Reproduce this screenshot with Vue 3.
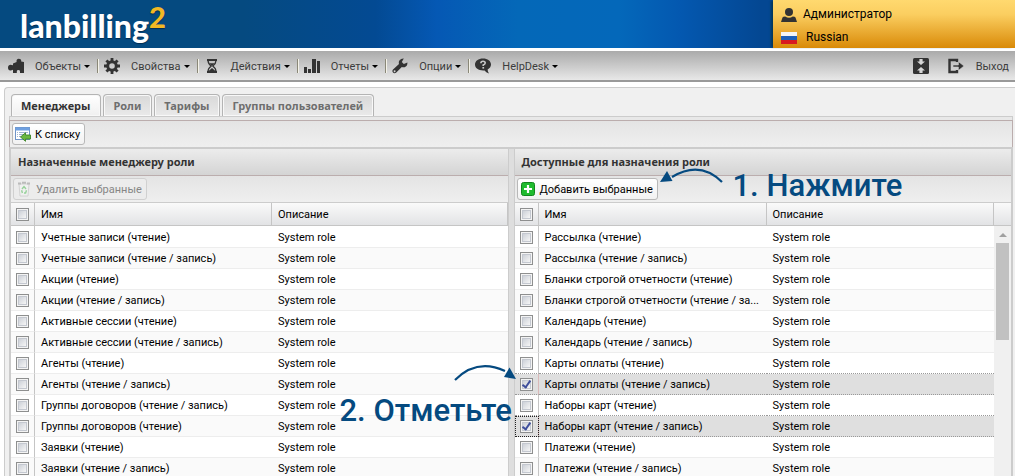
<script setup>
import { ref } from 'vue'

const menu = [
  { icon: 'puzzle', label: 'Объекты' },
  { icon: 'gear', label: 'Свойства' },
  { icon: 'hourglass', label: 'Действия' },
  { icon: 'bars', label: 'Отчеты' },
  { icon: 'wrench', label: 'Опции' },
  { icon: 'help', label: 'HelpDesk' }
]

const tabs = ['Менеджеры', 'Роли', 'Тарифы', 'Группы пользователей']
const activeTab = ref(0)

const assigned = ref([
  'Учетные записи (чтение)',
  'Учетные записи (чтение / запись)',
  'Акции (чтение)',
  'Акции (чтение / запись)',
  'Активные сессии (чтение)',
  'Активные сессии (чтение / запись)',
  'Агенты (чтение)',
  'Агенты (чтение / запись)',
  'Группы договоров (чтение / запись)',
  'Группы договоров (чтение)',
  'Заявки (чтение)',
  'Заявки (чтение / запись)'
].map((name) => ({ name, checked: false })))

const available = ref([
  'Рассылка (чтение)',
  'Рассылка (чтение / запись)',
  'Бланки строгой отчетности (чтение)',
  'Бланки строгой отчетности (чтение / за...',
  'Календарь (чтение)',
  'Календарь (чтение / запись)',
  'Карты оплаты (чтение)',
  'Карты оплаты (чтение / запись)',
  'Наборы карт (чтение)',
  'Наборы карт (чтение / запись)',
  'Платежи (чтение)',
  'Платежи (чтение / запись)'
].map((name, i) => ({ name, checked: i === 7 || i === 9, focused: i === 9 })))
</script>

<template>
  <div class="app">
    <header class="banner">
      <div class="logo"><span>lanbilling</span><span class="logo-two">2</span></div>
      <div class="account">
        <div class="account-row">
          <svg class="ic-user" viewBox="0 0 16 14" aria-hidden="true">
            <circle cx="8" cy="4" r="4" />
            <path d="M0 14 L1.5 9.5 Q2 8.6 4.2 8.6 Q8 11 11.8 8.6 Q14 8.6 14.5 9.5 L16 14 Z" />
          </svg>
          <span>Администратор</span>
        </div>
        <div class="account-row">
          <svg class="ic-flag" viewBox="0 0 16 12" aria-hidden="true">
            <rect width="16" height="12" fill="#f4f4f4" />
            <rect y="4" width="16" height="4" fill="#1d5fb8" />
            <rect y="8" width="16" height="4" fill="#d81920" />
          </svg>
          <span class="lang">Russian</span>
        </div>
      </div>
    </header>

    <nav class="menubar">
      <template v-for="item in menu" :key="item.label">
        <button type="button" class="menu-item">
          <svg class="menu-icon" viewBox="0 0 16 16" aria-hidden="true">
            <path v-if="item.icon === 'puzzle'" d="M5 5.4 L8.6 4 Q8 1 10.8 0.8 Q13.6 0.8 13.2 3.6 L16 4 V15 H12 V13.4 Q12 12 10.4 12 Q8.8 12 8.8 13.4 V15 H5 V11.8 Q3.8 12.6 2.4 12.6 Q0 12.4 0 9.6 Q0.2 6.8 2.6 6.8 Q4.4 6.8 5 7.2 Z" />
            <g v-else-if="item.icon === 'gear'">
              <circle cx="8" cy="8" r="4.3" fill="none" stroke="currentColor" stroke-width="3" />
              <path d="M6.6 0h2.8v3H6.6zM6.6 13h2.8v3H6.6zM0 6.6h3v2.8H0zM13 6.6h3v2.8h-3zM1.4 3.4l2-2 2.2 2.2-2 2zM10.4 12.4l2-2 2.2 2.2-2 2zM12.6 1.4l2 2-2.2 2.2-2-2zM3.6 10.4l2 2-2.2 2.2-2-2z" />
            </g>
            <g v-else-if="item.icon === 'hourglass'">
              <path d="M3 1h10v2H3zM3 13h10v2H3zM5.5 5.2h5L8 8zM4.6 13 L8 10 L11.4 13z" />
              <path d="M4 2.5 Q4 5.5 7.2 8 Q4 10.5 4 13.5 M12 2.5 Q12 5.5 8.8 8 Q12 10.5 12 13.5" fill="none" stroke="currentColor" stroke-width="1.3" />
            </g>
            <path v-else-if="item.icon === 'bars'" d="M0 9h3v6H0zM4 11h3v4H4zM8 1h4v14H8zM13 3h3v12h-3z" />
            <path v-else-if="item.icon === 'wrench'" d="M11.8 0.6 L9.8 4 L11.8 6 L15.4 4.6 Q15.6 8.2 12.6 9.2 Q11 9.5 9.8 9 L4 14.8 Q2.4 15.8 1 14.6 Q-0.2 13 1 11.6 L7 6 Q6.4 4.4 7.4 2.6 Q9 0.4 11.8 0.6 Z M2.6 12.3 A0.9 0.9 0 1 0 2.61 12.3 Z" fill-rule="evenodd" />
            <g v-else>
              <path d="M8 0.6 C12.6 0.6 16 3.2 16 6.6 C16 8.8 14.6 10.6 12.6 11.6 Q12.6 13.6 14 15.4 Q10.8 14.8 9.6 12.5 C4 13 0 10.4 0 6.6 C0 3.2 3.4 0.6 8 0.6 Z" />
              <path d="M5.9 5.2 Q5.9 3.2 8 3.2 Q10.2 3.2 10.2 4.9 Q10.2 6 8.2 7 V8" fill="none" stroke="#c8c8c8" stroke-width="1.6" />
              <rect x="7.4" y="9" width="1.7" height="1.6" fill="#c8c8c8" />
            </g>
          </svg>
          <span class="menu-label">{{ item.label }}</span>
          <span class="caret"></span>
        </button>
        <span v-if="item.icon !== 'help'" class="sep"></span>
      </template>

      <button type="button" class="menu-tool" aria-label="Свернуть">
        <svg class="menu-icon" viewBox="0 0 16 16" aria-hidden="true">
          <rect width="16" height="16" rx="1.5" />
          <path d="M6.4 1h3.2v2.4H12L8 7 4 3.4h2.4zM6.4 15h3.2v-2.4H12L8 9l-4 3.6h2.4z" fill="#d6d6d6" />
        </svg>
      </button>
      <button type="button" class="menu-exit">
        <svg class="menu-icon" viewBox="0 0 16 16" aria-hidden="true">
          <path d="M9 4V2H1.5v12H9v-2" fill="none" stroke="currentColor" stroke-width="2.4" />
          <path d="M5 7h5.4V3.6L16 8l-5.6 4.4V9H5z" stroke="#d0d0d0" stroke-width="0.6" />
        </svg>
        <span>Выход</span>
      </button>
    </nav>

    <main class="workspace">
      <div class="tabs" role="tablist">
        <button
          v-for="(tab, i) in tabs"
          :key="tab"
          type="button"
          role="tab"
          class="tab"
          :class="{ active: i === activeTab }"
          :aria-selected="i === activeTab"
          @click="activeTab = i"
        >{{ tab }}</button>
      </div>

      <section class="content">
        <div class="tab-base"></div>
        <div class="toolbar">
          <button type="button" class="btn">
            <svg class="btn-icon" viewBox="0 0 16 16" aria-hidden="true">
              <rect x="0.5" y="1.5" width="14" height="12" fill="#fff" stroke="#6f94c8" />
              <rect x="0.5" y="1.5" width="14" height="3" fill="#6fa0e0" />
              <path d="M2 6.5h1M2 8.5h1M2 10.5h1M4 6.5h9M4 8.5h5M4 10.5h2" stroke="#9fb4d0" />
              <path d="M5.5 11 L10.5 6.8 V9 H15.5 V13 H10.5 V15.3 Z" fill="#6ab840" stroke="#3c8528" stroke-width="0.9" />
            </svg>
            <span>К списку</span>
          </button>
        </div>

        <div class="split">
          <section class="panel">
            <h2 class="panel-title">Назначенные менеджеру роли</h2>
            <div class="toolbar inner">
              <button type="button" class="btn" disabled>
                <svg class="btn-icon" viewBox="0 0 16 16" aria-hidden="true">
                  <path d="M3 3h10l-1 12H4z" fill="#f4f4f4" stroke="#b8b8b8" stroke-width="0.8" />
                  <path d="M2 1.5h3v2H2zM6 0.8h4v2H6zM11 1.5h3v2h-3z" fill="#9c9c9c" />
                  <path d="M6 8l2-2.5 2 2.5M10.5 9.2L9.6 12H8M5.6 9.2L6.4 12" fill="none" stroke="#5fc065" stroke-width="1.4" />
                </svg>
                <span>Удалить выбранные</span>
              </button>
            </div>
            <div class="grid">
              <table class="rows">
                <colgroup><col class="c-check" /><col class="c-name" /><col /></colgroup>
                <thead>
                  <tr>
                    <th><input type="checkbox" aria-label="Выбрать все назначенные" /></th>
                    <th>Имя</th>
                    <th>Описание</th>
                  </tr>
                </thead>
                <tbody>
                  <tr v-for="row in assigned" :key="row.name" :class="{ picked: row.checked }">
                    <td><input v-model="row.checked" type="checkbox" :aria-label="row.name" /></td>
                    <td>{{ row.name }}</td>
                    <td>System role</td>
                  </tr>
                </tbody>
              </table>
            </div>
          </section>

          <div class="splitter"></div>

          <section class="panel right">
            <h2 class="panel-title">Доступные для назначения роли</h2>
            <div class="toolbar inner">
              <button type="button" class="btn">
                <svg class="btn-icon" viewBox="0 0 16 16" aria-hidden="true">
                  <rect x="1.5" y="1.5" width="13" height="13" rx="2" fill="#1fbb2e" stroke="#12861d" />
                  <path d="M8 4v8M4 8h8" stroke="#fff" stroke-width="2.2" />
                </svg>
                <span>Добавить выбранные</span>
              </button>
            </div>
            <div class="grid">
              <table class="rows">
                <colgroup><col class="c-check" /><col class="c-name narrow" /><col /><col class="c-scroll" /></colgroup>
                <thead>
                  <tr>
                    <th><input type="checkbox" aria-label="Выбрать все доступные" /></th>
                    <th>Имя</th>
                    <th>Описание</th>
                    <th class="filler"></th>
                  </tr>
                </thead>
                <tbody>
                  <tr
                    v-for="(row, i) in available"
                    :key="row.name"
                    :class="{ picked: row.checked, before: available[i + 1]?.checked }"
                  >
                    <td :class="{ focused: row.focused }"><input v-model="row.checked" type="checkbox" :aria-label="row.name" /></td>
                    <td>{{ row.name }}</td>
                    <td>System role</td>
                    <td v-if="i === 0" class="track" :rowspan="available.length">
                      <div class="scroll-up"></div>
                      <div class="scroll-thumb"></div>
                    </td>
                  </tr>
                </tbody>
              </table>
            </div>

            <div class="note note-press">
              <svg class="arrow" viewBox="0 0 64 24" aria-hidden="true">
                <path d="M62 14 Q40 -8 12 9" fill="none" stroke="#054a80" stroke-width="2.2" />
                <path d="M0 14 L7 3 L12.5 13 Z" fill="#054a80" />
              </svg>
              <span>1. Нажмите</span>
            </div>
            <div class="note note-mark">
              <svg class="arrow" viewBox="0 0 64 24" aria-hidden="true">
                <path d="M2 18 Q24 -4 52 9" fill="none" stroke="#054a80" stroke-width="2.2" />
                <path d="M63 17 L56.5 5.5 L51 15 Z" fill="#054a80" />
              </svg>
              <span>2. Отметьте</span>
            </div>
          </section>
        </div>
      </section>
    </main>
  </div>
</template>

<style>
body {
  margin: 0;
  background: #fff;
}
</style>

<style scoped>
*,
*::before {
  box-sizing: border-box;
}

.app {
  display: flex;
  flex-direction: column;
  height: 100vh;
  overflow: hidden;
  font: 11px/15px Roboto, "Noto Sans", sans-serif;
  color: #000;
}

button {
  margin: 0;
  padding: 0;
  border: 0;
  background: none;
  font: inherit;
  color: inherit;
  white-space: nowrap;
}

svg {
  display: block;
  flex: none;
}

.banner {
  display: flex;
  flex: none;
  justify-content: space-between;
  height: 48px;
  background: linear-gradient(90deg, #054a80 0, #054a80 24%, #034a93 37%, #0558b4 43%, #0468b8 51%, #0468ba 61%, #0458b0 67%, #044792 75%, #044792 100%);
}

.logo {
  display: flex;
  align-items: flex-start;
  padding-left: 20px;
  font: 900 32px/36px Lato, sans-serif;
  color: #fff;
  text-shadow: 0 1px 1px #022c50;
}

.logo span {
  padding-top: 8px;
}

.logo .logo-two {
  padding-top: 0;
  font-size: 29px;
  line-height: 34px;
  color: #f2b824;
}

.account {
  display: flex;
  flex-direction: column;
  gap: 6px;
  width: 242px;
  padding: 6px 8px;
  background: linear-gradient(#ffd96f, #fbce60 30%, #d98a08);
  box-shadow: -3px 0 2px -1px #03385c;
  font-size: 12px;
  line-height: 17px;
}

.account-row {
  display: flex;
  align-items: center;
  gap: 6px;
}

.ic-user {
  width: 16px;
  height: 14px;
  fill: #333;
}

.ic-flag {
  width: 16px;
  height: 12px;
}

.lang {
  padding-left: 3px;
}

.menubar {
  display: flex;
  flex: none;
  align-items: center;
  height: 31px;
  margin-top: 3px;
  padding: 1px 6px 0 8px;
  border-bottom: 2px solid #999;
  background: linear-gradient(#aaa, #e8e8e8);
  color: #3c3c3c;
}

.menu-item {
  display: flex;
  align-items: center;
}

.menu-icon {
  width: 16px;
  height: 16px;
  fill: #333;
  color: #333;
}

.menu-label {
  margin: 0 3px 0 11px;
}

.caret {
  border: solid transparent;
  border-width: 3px 3px 0;
  border-top-color: #000;
}

.sep {
  width: 2px;
  height: 14px;
  margin: 0 5px 0 7px;
  border-left: 1px solid #8a8878;
  background: #f4f2e8;
}

.menu-tool {
  margin-left: auto;
}

.menu-exit {
  display: flex;
  align-items: center;
  gap: 12px;
  margin-left: 19px;
}

.workspace {
  display: flex;
  flex: 1;
  flex-direction: column;
  min-height: 0;
  margin: 5px 0 0 4px;
  padding: 6px 2px 0 4px;
  border: 1px solid #ccc;
  border-width: 1px 0 0 1px;
  border-radius: 4px 0 0 0;
  background: #f0f0f0;
}

.tabs {
  display: flex;
  flex: none;
  gap: 2px;
  padding-left: 2px;
  font-family: "Noto Sans", "Open Sans", sans-serif;
}

.tab {
  height: 22px;
  padding: 0 10px 0 9px;
  border: 1px solid #b4b4b4;
  border-bottom: 0;
  border-radius: 4px 4px 0 0;
  background: linear-gradient(#d8d8d8, #eaeaea);
  box-shadow: inset 0 0 0 1px #f8f8f8;
  font-weight: bold;
  color: #6e6e6e;
}

.tab.active {
  background: linear-gradient(#fff, #f0f0f0);
  color: #333;
}

.content {
  display: flex;
  flex: 1;
  flex-direction: column;
  min-height: 0;
}

.tab-base {
  flex: none;
  height: 4px;
  border: 1px solid #ccc;
  border-bottom: 0;
  background: #e8e8e8;
}

.toolbar {
  display: flex;
  flex: none;
  align-items: center;
  height: 27px;
  padding: 0 2px;
  border: 1px solid #bbadad;
  border-bottom: 0;
  background: linear-gradient(#e4e4e4, #efefef);
}

.btn {
  display: flex;
  align-items: center;
  gap: 4px;
  height: 22px;
  padding: 0 4px 0 2px;
  border: 1px solid #b8b8b8;
  border-radius: 3px;
  background: linear-gradient(#fff, #f2f2f2);
}

.btn:disabled {
  border-color: #d0d0d0;
  background: #ececec;
  color: #868686;
}

.btn:disabled .btn-icon {
  opacity: 0.6;
}

.btn-icon {
  width: 16px;
  height: 16px;
}

.split {
  display: flex;
  flex: 1;
  min-height: 0;
  border-top: 2px solid #ccc;
}

.panel {
  position: relative;
  display: flex;
  flex: 1 1 0;
  flex-direction: column;
  min-width: 0;
  border: solid #ccc;
  border-width: 0 1px 0 2px;
}

.panel.right {
  border-width: 0 2px 0 1px;
}

.splitter {
  flex: none;
  width: 5px;
  background: #dedede;
}

.panel-title {
  flex: none;
  height: 26px;
  margin: 0;
  padding: 0 7px;
  background: linear-gradient(#ececec, #d4d4d4);
  font-family: "Noto Sans", "Open Sans", sans-serif;
  font-size: 11px;
  line-height: 26px;
  color: #333;
}

.toolbar.inner {
  border-width: 1px 0 0;
}

.grid {
  flex: 1;
  min-height: 0;
  overflow: hidden;
  border-top: 1px solid #ccc;
  background: #fff;
}

.rows {
  width: 100%;
  border-collapse: separate;
  border-spacing: 0;
  table-layout: fixed;
}

.c-check {
  width: 24px;
}

.c-name {
  width: 237px;
}

.c-name.narrow {
  width: 228px;
}

.c-scroll {
  width: 17px;
}

th {
  height: 23px;
  padding: 0 6px;
  border: solid #c5c5c5;
  border-width: 0 1px 1px 0;
  background: linear-gradient(#fafafa, #e2e3e5);
  font-weight: normal;
  text-align: left;
}

th.filler {
  border-right: 0;
}

td {
  height: 21px;
  padding: 0 6px;
  border-bottom: 1px solid #ededed;
  overflow: hidden;
  text-overflow: ellipsis;
  white-space: nowrap;
}

th:first-child,
td:first-child {
  padding: 0 0 0 5px;
}

td:first-child {
  border-right: 1px solid #c5c5c5;
}

tbody tr:first-child td {
  height: 22px;
  padding-top: 1px;
}

tr:nth-child(even) td {
  background: #fafafa;
}

tr.before td {
  border-bottom: 1px dotted #999;
}

tr.picked td {
  border-bottom: 1px dotted #999;
  background: #dfdfdf;
}

tr.picked td:first-child {
  border-right: 1px solid #d9b8b8;
}

tr td.focused {
  outline: 1px dotted #222;
  outline-offset: -1px;
}

tbody tr:first-child td.track {
  padding: 0 2px;
  border: 0;
  background: #f0f0f0;
  vertical-align: top;
}

.scroll-up {
  width: 0;
  margin: 7px 3px 6px;
  border: solid transparent;
  border-width: 0 4px 4px;
  border-bottom-color: #a0a0a0;
}

.scroll-thumb {
  height: 97px;
  background: #c1c1c1;
}

input[type="checkbox"] {
  position: relative;
  display: block;
  width: 13px;
  height: 13px;
  margin: 0;
  padding: 2px;
  appearance: none;
  border: 1px solid #8e8f8f;
  background: linear-gradient(135deg, #cdd1d8, #f6f6f6) content-box, #f6f6f6;
  box-shadow: inset 0 0 0 1px #f4f4f4, inset 0 0 0 2px #c4c8d0;
}

input[type="checkbox"]:checked::before {
  content: "";
  position: absolute;
  top: 0;
  left: 3px;
  width: 5px;
  height: 9px;
  border: solid #3f4f9c;
  border-width: 0 2px 2px 0;
  transform: rotate(35deg);
}

.note {
  position: absolute;
  display: flex;
  font: 500 31px/36px Roboto, sans-serif;
  color: #054a80;
  white-space: nowrap;
  pointer-events: none;
}

.arrow {
  width: 64px;
  height: 24px;
}

.note-press {
  top: 19px;
  left: 145px;
  gap: 9px;
}

.note-mark {
  top: 213px;
  left: -175px;
  flex-direction: column;
  gap: 7px;
}

.note-mark .arrow {
  margin-left: 113px;
}
</style>
